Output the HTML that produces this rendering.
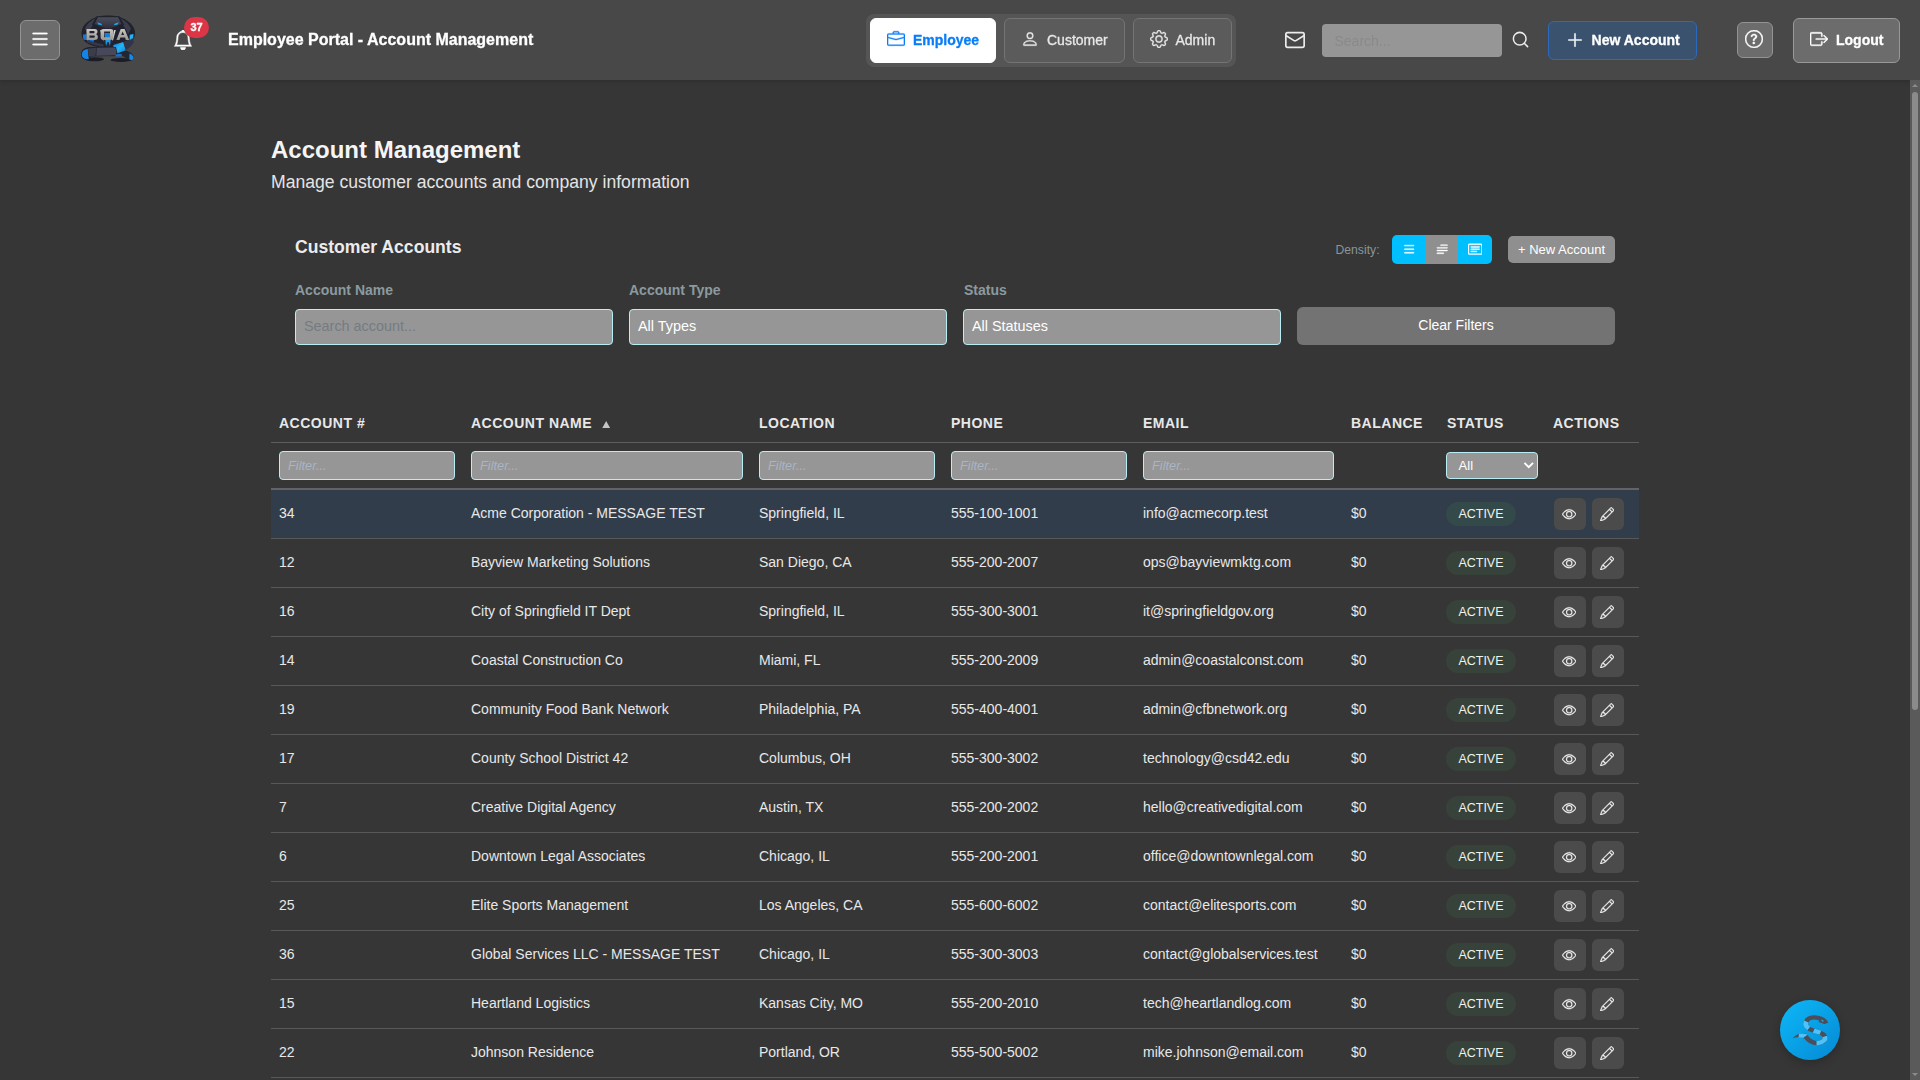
<!DOCTYPE html>
<html lang="en">
<head>
<meta charset="utf-8">
<title>Employee Portal - Account Management</title>
<style>
*{box-sizing:border-box;margin:0;padding:0}
html,body{width:1920px;height:1080px;overflow:hidden;background:#363636;font-family:"Liberation Sans",sans-serif;color:#fff}
body{position:relative}
.abs{position:absolute}
/* ---------- header ---------- */
#hdr{position:absolute;left:0;top:0;width:1920px;height:80px;background:#484848;box-shadow:0 2px 4px rgba(0,0,0,.14);will-change:transform}
#hdr svg{display:block}
#hdr{-webkit-text-stroke:.3px currentColor}
.hbtn{position:absolute;border-radius:6px;background:#6c6c6c;border:1px solid #939393}
#burger{left:20px;top:20px;width:40px;height:40px}
#ptitle{position:absolute;left:228px;top:30px;font-size:16px;font-weight:bold;line-height:20px;white-space:nowrap}
#badge{position:absolute;left:184px;top:17px;width:25px;height:21px;border-radius:11px;background:#dc3545;font-size:11px;font-weight:bold;line-height:20.400px;text-align:center}
#tabs{position:absolute;left:866px;top:14px;width:370px;height:53px;border-radius:8px;background:#555}
.tab{position:absolute;top:4px;height:45px;border-radius:6px;border:1px solid #747474;background:#5b5b5b;font-size:14px;color:#e8e8e8;white-space:nowrap}
.tab span{position:absolute;top:11px;line-height:20px}
.tab svg{position:absolute;width:18px;height:18px;fill:currentColor;stroke:currentColor;stroke-width:.3}
.tab.on{background:#fff;border-color:#fff;color:#0a7df8;font-weight:bold}
#hsearch{position:absolute;left:1322px;top:24px;width:180px;height:33px;border-radius:4px;background:#969696;color:#8a8a8a;font-size:14px;line-height:34px;padding-left:12.500px;-webkit-text-stroke:0}
#newacc{position:absolute;left:1548px;top:21px;width:149px;height:39px;border-radius:6px;background:#3a526e;border:1px solid #2a6bc0;font-size:14px;font-weight:bold;white-space:nowrap}
#help{left:1737px;top:22px;width:36px;height:36px}
#logout{left:1793px;top:18px;width:107px;height:45px;font-size:14px;font-weight:bold;white-space:nowrap;border-color:#999}
/* ---------- scrollbar ---------- */
#sb{position:absolute;left:1910px;top:80px;width:10px;height:1000px;background:#5a5a5a}
#sbth{position:absolute;left:2px;top:12px;width:6px;height:618px;border-radius:3px;background:#8b8b8b}
/* ---------- content ---------- */
#h1{position:absolute;left:271px;top:136px;font-size:24px;font-weight:bold;line-height:28px;white-space:nowrap;color:#f5f5f5}
#sub{position:absolute;left:271px;top:172px;font-size:17.6px;line-height:20px;color:#e4e4e4;white-space:nowrap}
#ctitle{position:absolute;left:295px;top:236px;font-size:17.6px;font-weight:bold;line-height:22px;color:#ececec;white-space:nowrap}
.lbl{position:absolute;top:282px;font-size:14px;font-weight:bold;line-height:16px;color:#8b9a9e;white-space:nowrap}
.fin{position:absolute;top:309px;width:318px;height:36px;border-radius:4px;background:#969696;border:1px solid #b8edf3;font-size:14.4px;line-height:32px;padding-left:8px;color:#fff;white-space:nowrap}
#clear{position:absolute;left:1297px;top:307px;width:318px;height:38px;border-radius:6px;background:#737373;font-size:14px;line-height:36px;text-align:center;color:#fff}
#dens{position:absolute;left:1335.500px;top:242.700px;font-size:12.200px;line-height:14px;color:#8a9498}
#dgrp{position:absolute;left:1392px;top:235px;width:100px;height:29px;border-radius:5px;overflow:hidden;background:#00bfff}
#dgrp i{position:absolute;left:33px;top:0;width:33px;height:29px;background:#8f8f8f}
#dgrp svg{position:absolute;top:7.300px;width:14.400px;height:14.400px;fill:#fff;stroke:#fff;stroke-width:.5}
#newacc2{position:absolute;left:1508px;top:236px;width:107px;height:27px;border-radius:5px;background:#8f8f8f;font-size:13px;line-height:27px;text-align:center;color:#fff;white-space:nowrap}
/* ---------- table ---------- */
#tbl{position:absolute;left:271px;top:404px;width:1368px;border-collapse:separate;border-spacing:0;table-layout:fixed}
#tbl th{height:39px;text-align:left;padding:0 8px;font-size:14px;font-weight:bold;letter-spacing:.5px;color:#e8e8e8;border-bottom:1px solid #5e5e5e;white-space:nowrap;vertical-align:middle}
#tbl tr.f td{height:47px;border-bottom:2px solid #636363;padding:0 8px;vertical-align:middle}
#tbl tr.r td{height:49px;padding:0 8px 3px;font-size:14px;color:#e8e8e8;border-bottom:1px solid #585858;white-space:nowrap;vertical-align:middle}
#tbl tr.r td.c{padding:0 8px 1px}
#tbl tr.sel td{background:#323d4c}
.flt{height:29px;border-radius:4px;background:#969696;border:1px solid #b8edf3;font-size:12.800px;font-style:italic;line-height:27px;padding-left:8px;color:#a9b4c4}
.srt{display:inline-block;margin-left:9.500px;width:8.400px;height:7.500px;fill:#c4c4c4;vertical-align:baseline}
#ssel{position:relative;height:27px;width:92px;margin-left:-1px;border-radius:4px;background:#969696;border:1px solid #b8edf3;font-size:13px;line-height:25px;padding-left:11.600px;color:#fff}
#ssel svg{position:absolute;right:2.500px;top:8px;width:11.500px;height:8.600px;fill:none;stroke:#fff;stroke-width:2}
.pill{display:inline-block;vertical-align:middle;height:24px;line-height:24px;padding:0 12.400px;margin-left:-1px;border-radius:12px;background:#37433a;font-size:12.500px;color:#eef3ee}
.sel .pill{background:#33494a}
.ab{display:inline-block;vertical-align:middle;position:relative;width:32px;height:32px;border-radius:6px;background:#4b4b4b;margin-right:6px}
.ab svg{position:absolute;left:8.100px;top:9.400px;width:14.400px;height:14.400px;fill:#f0f0f0;stroke:#f0f0f0;stroke-width:.3}
.hi{position:absolute;fill:#fff;stroke:#fff;stroke-width:.4}
#fab{position:absolute;left:1780px;top:1000px;width:60px;height:60px;border-radius:50%;background:linear-gradient(135deg,#0db8f8,#0589d4);box-shadow:0 3px 10px rgba(0,0,0,.22);overflow:hidden}
</style>
</head>
<body>
<div id="hdr">
  <div id="burger" class="hbtn"><svg class="hi" style="left:8px;top:6.900px;width:22px;height:22px;stroke-width:.25" viewBox="0 0 16 16"><path fill-rule="evenodd" d="M2.5 12a.5.5 0 0 1 .5-.5h10a.5.5 0 0 1 0 1H3a.5.5 0 0 1-.5-.5zm0-4a.5.5 0 0 1 .5-.5h10a.5.5 0 0 1 0 1H3a.5.5 0 0 1-.5-.5zm0-4a.5.5 0 0 1 .5-.5h10a.5.5 0 0 1 0 1H3a.5.5 0 0 1-.5-.5z"/></svg></div>
  <svg style="position:absolute;left:78px;top:12px;width:60px;height:54px" viewBox="0 0 1200 1080">
<defs><filter id="lb" x="-5%" y="-5%" width="110%" height="110%"><feGaussianBlur stdDeviation="5"/></filter>
<linearGradient id="lg1" x1="0" y1="0" x2="0" y2="1"><stop offset="0" stop-color="#4a4d5d"/><stop offset="1" stop-color="#2c2e3b"/></linearGradient>
<linearGradient id="lg2" x1="0" y1="0" x2="0" y2="1"><stop offset="0" stop-color="#c9c7c0"/><stop offset="1" stop-color="#9a9892"/></linearGradient>
<linearGradient id="lg3" x1="0" y1="0" x2="1" y2="1"><stop offset="0" stop-color="#0f7fe0"/><stop offset=".5" stop-color="#25b4f5"/><stop offset="1" stop-color="#0f7fe0"/></linearGradient></defs>
<g filter="url(#lb)">
<ellipse cx="330" cy="945" rx="190" ry="42" fill="#1b1d28"/>
<ellipse cx="860" cy="958" rx="210" ry="40" fill="#1b1d28"/>
<path d="M600 70C900 70 1140 225 1140 425C1140 610 940 715 600 715C260 715 70 610 70 425C70 225 300 70 600 70Z" fill="#20222d"/>
<path d="M140 330C190 215 290 150 370 120L300 270C250 320 215 380 200 450Z" fill="#3a3d4c"/>
<path d="M1060 330C1010 215 910 150 830 120L900 270C950 320 985 380 1000 450Z" fill="#3a3d4c"/>
<path d="M95 455L165 440L175 560L110 555Z" fill="#1477d8"/>
<path d="M1035 455L1110 440L1095 590L1030 585Z" fill="#22b3f3"/>
<path d="M180 560L330 555L300 610L200 605Z" fill="#1270d0"/>
<path d="M170 600C300 660 420 690 520 690L500 640C400 630 300 600 215 560Z" fill="#34374a"/>
<path d="M1040 600C950 660 850 690 700 700L720 640C830 630 930 600 1000 560Z" fill="#3a3d4c"/>
<path d="M370 85L830 85L925 255L740 350L460 350L275 255Z" fill="#20222d"/>
<path d="M400 105L800 105L870 240L640 330L560 330L330 240Z" fill="url(#lg1)"/>
<path d="M385 205L470 235L480 265L405 250Z" fill="#1fa9ee"/>
<path d="M815 205L730 235L720 265L795 250Z" fill="#1fa9ee"/>
<path d="M470 350L730 350L700 600L640 690L560 690L500 600Z" fill="#262835"/>
<path d="M530 420L670 420L655 540L545 540Z" fill="#1182e0"/>
<path d="M548 560L652 560L640 680L612 600L588 600L560 680Z" fill="#1c9aee"/>
<path d="M445 360L475 360L520 560L500 570Z" fill="#d8d8dc"/>
<path d="M755 360L725 360L680 560L700 570Z" fill="#d8d8dc"/>
<path d="M700 665L905 600L955 765L785 825Z" fill="url(#lg3)"/>
<path d="M905 600C1000 570 1060 560 1090 520L1120 600C1080 680 1010 730 955 765Z" fill="#32354a"/>
<path d="M60 850C60 740 150 700 260 700L760 700L790 830L760 880L260 890L200 960C120 960 60 930 60 850Z" fill="#20222d"/>
<path d="M75 850C75 780 130 745 195 740L215 940C130 950 75 915 75 850Z" fill="#1583e6"/>
<path d="M200 730L365 715L350 875L215 890Z" fill="#3a3d4c"/>
<path d="M375 715L745 710L770 800L750 865L365 875Z" fill="#474a5a"/>
<path d="M790 830L960 770C1060 800 1120 860 1115 930C1100 975 1040 975 1010 960L900 880L770 880Z" fill="#23252f"/>
<path d="M1030 830C1090 850 1120 900 1110 940C1090 965 1050 960 1025 945Z" fill="#1588e8"/>
<path d="M740 850L870 835L880 885L760 890Z" fill="#1270d0"/>
</g>
<g filter="url(#lb)" fill="url(#lg2)">
<path fill-rule="evenodd" d="M170 338L330 338C378 338 390 364 390 392C390 422 378 438 358 446C383 452 397 474 397 504C397 542 378 558 330 558L170 558ZM230 380L230 426L312 426C326 426 331 416 331 403C331 390 326 380 312 380ZM230 468L230 516L316 516C332 516 337 505 337 492C337 479 332 468 316 468Z"/>
<path fill-rule="evenodd" d="M512 338L650 338C694 338 710 360 710 398L710 498C710 536 694 558 650 558L512 558C468 558 452 536 452 498L452 398C452 360 468 338 512 338ZM522 392L522 504L640 504L640 392Z"/>
<path fill-rule="evenodd" d="M855 338L932 338L1022 558L958 558L940 512L847 512L829 558L768 558ZM893 388L864 462L922 462Z"/>
</g>
</svg>
  <svg class="hi" style="left:172.900px;top:30px;width:20px;height:20px;stroke:#fff;stroke-width:.45" viewBox="0 0 16 16"><path d="M8 16a2 2 0 0 0 2-2H6a2 2 0 0 0 2 2zM8 1.918l-.797.161A4.002 4.002 0 0 0 4 6c0 .628-.134 2.197-.459 3.742-.16.767-.376 1.566-.663 2.258h10.244c-.287-.692-.502-1.490-.663-2.258C12.134 8.197 12 6.628 12 6a4.002 4.002 0 0 0-3.203-3.920L8 1.917zM14.220 12c.223.447.481.801.780 1H1c.299-.199.557-.553.780-1C2.680 10.200 3 6.880 3 6c0-2.420 1.720-4.440 4.005-4.901a1 1 0 1 1 1.990 0A5.002 5.002 0 0 1 13 6c0 .880.320 4.200 1.220 6z"/></svg>
  <div id="badge">37</div>
  <div id="ptitle">Employee Portal - Account Management</div>
  <div id="tabs">
    <div class="tab on" style="left:4px;width:126px"><svg style="left:16px;top:11px" viewBox="0 0 16 16"><path d="M6.500 1A1.500 1.500 0 0 0 5 2.500V3H1.500A1.500 1.500 0 0 0 0 4.500v8A1.500 1.500 0 0 0 1.500 14h13a1.500 1.500 0 0 0 1.500-1.500v-8A1.500 1.500 0 0 0 14.500 3H11v-.5A1.500 1.500 0 0 0 9.500 1h-3zm0 1h3a.5.5 0 0 1 .5.5V3H6v-.5a.5.5 0 0 1 .5-.5zm1.886 6.914L15 7.151V12.500a.5.5 0 0 1-.5.5h-13a.5.5 0 0 1-.5-.5V7.150l6.614 1.764a1.500 1.500 0 0 0 .772 0zM1.500 4h13a.5.5 0 0 1 .5.5v1.616L8.129 7.948a.5.5 0 0 1-.258 0L1 6.116V4.500a.5.5 0 0 1 .5-.5z"/></svg><span style="left:42px">Employee</span></div>
    <div class="tab" style="left:138px;width:121px"><svg style="left:15.600px;top:11px" viewBox="0 0 16 16"><path d="M8 8a3 3 0 1 0 0-6 3 3 0 0 0 0 6zm2-3a2 2 0 1 1-4 0 2 2 0 0 1 4 0zm4 8c0 1-1 1-1 1H3s-1 0-1-1 1-4 6-4 6 3 6 4zm-1-.004c-.001-.246-.154-.986-.832-1.664C11.516 10.680 10.289 10 8 10c-2.290 0-3.516.680-4.168 1.332-.678.678-.830 1.418-.832 1.664h10z"/></svg><span style="left:42px">Customer</span></div>
    <div class="tab" style="left:267px;width:99px"><svg style="left:15.500px;top:11px" viewBox="0 0 16 16"><path d="M8 4.754a3.246 3.246 0 1 0 0 6.492 3.246 3.246 0 0 0 0-6.492zM5.754 8a2.246 2.246 0 1 1 4.492 0 2.246 2.246 0 0 1-4.492 0z"/><path d="M9.796 1.343c-.527-1.790-3.065-1.790-3.592 0l-.094.319a.873.873 0 0 1-1.255.520l-.292-.160c-1.640-.892-3.433.902-2.540 2.541l.159.292a.873.873 0 0 1-.520 1.255l-.319.094c-1.790.527-1.790 3.065 0 3.592l.319.094a.873.873 0 0 1 .520 1.255l-.160.292c-.892 1.640.901 3.434 2.541 2.540l.292-.159a.873.873 0 0 1 1.255.520l.094.319c.527 1.790 3.065 1.790 3.592 0l.094-.319a.873.873 0 0 1 1.255-.520l.292.160c1.640.893 3.434-.902 2.540-2.541l-.159-.292a.873.873 0 0 1 .520-1.255l.319-.094c1.790-.527 1.790-3.065 0-3.592l-.319-.094a.873.873 0 0 1-.520-1.255l.160-.292c.893-1.640-.902-3.433-2.541-2.540l-.292.159a.873.873 0 0 1-1.255-.520l-.094-.319zm-2.633.283c.246-.835 1.428-.835 1.674 0l.094.319a1.873 1.873 0 0 0 2.693 1.115l.291-.160c.764-.415 1.600.420 1.184 1.185l-.159.292a1.873 1.873 0 0 0 1.116 2.692l.318.094c.835.246.835 1.428 0 1.674l-.319.094a1.873 1.873 0 0 0-1.115 2.693l.160.291c.415.764-.420 1.600-1.185 1.184l-.291-.159a1.873 1.873 0 0 0-2.693 1.116l-.094.318c-.246.835-1.428.835-1.674 0l-.094-.319a1.873 1.873 0 0 0-2.692-1.115l-.292.160c-.764.415-1.600-.420-1.184-1.185l.159-.291A1.873 1.873 0 0 0 1.945 8.930l-.319-.094c-.835-.246-.835-1.428 0-1.674l.319-.094A1.873 1.873 0 0 0 3.060 4.377l-.160-.292c-.415-.764.420-1.600 1.185-1.184l.292.159a1.873 1.873 0 0 0 2.692-1.115l.094-.319z"/></svg><span style="left:41.500px">Admin</span></div>
  </div>
  <svg class="hi" style="left:1284px;top:29px;width:22px;height:22px;fill:none;stroke:#ececec;stroke-width:1.850;stroke-linecap:round;stroke-linejoin:round" viewBox="0 0 24 24"><rect x="2" y="4" width="20" height="16" rx="2"/><path d="m22 7-8.970 5.700a1.940 1.940 0 0 1-2.060 0L2 7"/></svg>
  <div id="hsearch">Search...</div>
  <svg class="hi" style="left:1511.470px;top:30.220px;width:19px;height:19px;fill:none;stroke:#ececec;stroke-width:1.900;stroke-linecap:round;stroke-linejoin:round" viewBox="0 0 24 24"><circle cx="11" cy="11" r="8"/><path d="m21 21-4.300-4.300"/></svg>
  <div id="newacc"><svg class="hi" style="left:17px;top:9px;width:18px;height:18px" viewBox="0 0 16 16"><path fill-rule="evenodd" d="M8 2a.5.5 0 0 1 .5.5v5h5a.5.5 0 0 1 0 1h-5v5a.5.5 0 0 1-1 0v-5h-5a.5.5 0 0 1 0-1h5v-5A.5.5 0 0 1 8 2Z"/></svg><span style="position:absolute;left:42.600px;top:8px;line-height:20px">New Account</span></div>
  <div id="help" class="hbtn"><svg class="hi" style="left:7.200px;top:7px;width:18px;height:18px" viewBox="0 0 16 16"><path d="M8 15A7 7 0 1 1 8 1a7 7 0 0 1 0 14zm0 1A8 8 0 1 0 8 0a8 8 0 0 0 0 16z"/><path d="M5.255 5.786a.237.237 0 0 0 .241.247h.825c.138 0 .248-.113.266-.250.090-.656.540-1.134 1.342-1.134.686 0 1.314.343 1.314 1.168 0 .635-.374.927-.965 1.371-.673.489-1.206 1.060-1.168 1.987l.003.217a.250.250 0 0 0 .250.246h.811a.250.250 0 0 0 .250-.250v-.105c0-.718.273-.927 1.010-1.486.609-.463 1.244-.977 1.244-2.056 0-1.511-1.276-2.241-2.673-2.241-1.267 0-2.655.590-2.750 2.286zm1.557 5.763c0 .533.425.927 1.010.927.609 0 1.028-.394 1.028-.927 0-.552-.420-.940-1.029-.940-.584 0-1.009.388-1.009.940z"/></svg></div>
  <div id="logout" class="hbtn"><svg class="hi" style="left:15.500px;top:11px;width:18px;height:18px" viewBox="0 0 16 16"><path fill-rule="evenodd" d="M10 12.500a.5.5 0 0 1-.5.5h-8a.5.5 0 0 1-.5-.5v-9a.5.5 0 0 1 .5-.5h8a.5.5 0 0 1 .5.5v2a.5.5 0 0 0 1 0v-2A1.500 1.500 0 0 0 9.500 2h-8A1.500 1.500 0 0 0 0 3.500v9A1.500 1.500 0 0 0 1.500 14h8a1.500 1.500 0 0 0 1.500-1.500v-2a.5.5 0 0 0-1 0v2z"/><path fill-rule="evenodd" d="M15.854 8.354a.5.5 0 0 0 0-.708l-3-3a.5.5 0 0 0-.708.708L14.293 7.500H5.500a.5.5 0 0 0 0 1h8.793l-2.147 2.146a.5.5 0 0 0 .708.708l3-3z"/></svg><span style="position:absolute;left:42px;top:11px;line-height:20px">Logout</span></div>
</div>
<div id="sb"><div id="sbth"></div><svg style="position:absolute;left:0;top:0" width="10" height="1000"><path d="M5 4L8 7H2Z" fill="#8b8b8b"/><path d="M5 996L8 993H2Z" fill="#8b8b8b"/></svg></div>

<div id="h1">Account Management</div>
<div id="sub">Manage customer accounts and company information</div>
<div id="ctitle">Customer Accounts</div>
<div id="dens">Density:</div>
<div id="dgrp"><i></i><svg style="left:10.200px" viewBox="0 0 16 16"><path fill-rule="evenodd" d="M2.500 12a.5.5 0 0 1 .5-.5h10a.5.5 0 0 1 0 1H3a.5.5 0 0 1-.5-.5zm0-4a.5.5 0 0 1 .5-.5h10a.5.5 0 0 1 0 1H3a.5.5 0 0 1-.5-.5zm0-4a.5.5 0 0 1 .5-.5h10a.5.5 0 0 1 0 1H3a.5.5 0 0 1-.5-.5z"/></svg><svg style="left:43.100px" viewBox="0 0 16 16"><path fill-rule="evenodd" d="M2 12.500a.5.5 0 0 1 .5-.5h7a.5.5 0 0 1 0 1h-7a.5.5 0 0 1-.5-.5zm0-3a.5.5 0 0 1 .5-.5h11a.5.5 0 0 1 0 1h-11a.5.5 0 0 1-.5-.5zm0-3a.5.5 0 0 1 .5-.5h11a.5.5 0 0 1 0 1h-11a.5.5 0 0 1-.5-.5zm4-3a.5.5 0 0 1 .5-.5h7a.5.5 0 0 1 0 1h-7a.5.5 0 0 1-.5-.5z"/></svg><svg style="left:76px" viewBox="0 0 16 16"><path d="M14.500 3a.5.5 0 0 1 .5.5v9a.5.5 0 0 1-.5.5h-13a.5.5 0 0 1-.5-.5v-9a.5.5 0 0 1 .5-.5h13zm-13-1A1.500 1.500 0 0 0 0 3.500v9A1.500 1.500 0 0 0 1.500 14h13a1.500 1.500 0 0 0 1.500-1.500v-9A1.500 1.500 0 0 0 14.500 2h-13z"/><path d="M3 5.500a.5.5 0 0 1 .5-.5h9a.5.5 0 0 1 0 1h-9a.5.5 0 0 1-.5-.5zM3 8a.5.5 0 0 1 .5-.5h9a.5.5 0 0 1 0 1h-9A.5.5 0 0 1 3 8zm0 2.500a.5.5 0 0 1 .5-.5h6a.5.5 0 0 1 0 1h-6a.5.5 0 0 1-.5-.5z"/></svg></div>
<div id="newacc2">+ New Account</div>
<div class="lbl" style="left:295px">Account Name</div>
<div class="lbl" style="left:629px">Account Type</div>
<div class="lbl" style="left:964px">Status</div>
<div class="fin" style="left:295px;color:#747c82">Search account...</div>
<div class="fin" style="left:629px">All Types</div>
<div class="fin" style="left:963px">All Statuses</div>
<div id="clear">Clear Filters</div>

<table id="tbl">
<colgroup><col style="width:192px"><col style="width:288px"><col style="width:192px"><col style="width:192px"><col style="width:208px"><col style="width:96px"><col style="width:106px"><col style="width:94px"></colgroup>
<thead>
<tr><th>ACCOUNT #</th><th>ACCOUNT NAME<svg class="srt" viewBox="0 0 84 75"><path d="M42 0L84 75H0Z"/></svg></th><th>LOCATION</th><th>PHONE</th><th>EMAIL</th><th>BALANCE</th><th>STATUS</th><th>ACTIONS</th></tr>
<tr class="f"><td><div class="flt">Filter...</div></td><td><div class="flt">Filter...</div></td><td><div class="flt">Filter...</div></td><td><div class="flt">Filter...</div></td><td><div class="flt" style="margin-right:1px">Filter...</div></td><td></td><td><div id="ssel">All<svg viewBox="0 0 12 9"><path d="M1.500 2l4.500 4.500L10.500 2"/></svg></div></td><td></td></tr>
</thead>
<tbody id="tb">
<tr class="r sel"><td>34</td><td>Acme Corporation - MESSAGE TEST</td><td>Springfield, IL</td><td>555-100-1001</td><td>info@acmecorp.test</td><td>$0</td><td class="c"><span class="pill">ACTIVE</span></td><td class="c"><span class="ab" style="margin-left:1px"><svg class="ie" viewBox="0 0 16 16"><path d="M16 8s-3-5.500-8-5.500S0 8 0 8s3 5.500 8 5.500S16 8 16 8zM1.173 8a13.133 13.133 0 0 1 1.660-2.043C4.120 4.668 5.880 3.500 8 3.500c2.120 0 3.879 1.168 5.168 2.457A13.133 13.133 0 0 1 14.828 8c-.058.087-.122.183-.195.288-.335.480-.830 1.120-1.465 1.755C11.879 11.332 10.119 12.500 8 12.500c-2.120 0-3.879-1.168-5.168-2.457A13.134 13.134 0 0 1 1.172 8z"/><path d="M8 5.500a2.500 2.500 0 1 0 0 5 2.500 2.500 0 0 0 0-5zM4.500 8a3.500 3.500 0 1 1 7 0 3.500 3.500 0 0 1-7 0z"/></svg></span><span class="ab"><svg class="ip" viewBox="0 0 16 16"><path d="M12.146.146a.5.5 0 0 1 .708 0l3 3a.5.5 0 0 1 0 .708l-10 10a.5.5 0 0 1-.168.110l-5 2a.5.5 0 0 1-.650-.650l2-5a.5.5 0 0 1 .110-.168l10-10zM11.207 2.500 13.500 4.793 14.793 3.500 12.500 1.207 11.207 2.500zm1.586 3L10.500 3.207 4 9.707V10h.5a.5.5 0 0 1 .5.5v.5h.5a.5.5 0 0 1 .5.5v.5h.293l6.500-6.500zm-9.761 5.175-.106.106-1.528 3.821 3.821-1.528.106-.106A.5.5 0 0 1 5 12.500V12h-.5a.5.5 0 0 1-.5-.5V11h-.5a.5.5 0 0 1-.468-.325z"/></svg></span></td></tr>
<tr class="r"><td>12</td><td>Bayview Marketing Solutions</td><td>San Diego, CA</td><td>555-200-2007</td><td>ops@bayviewmktg.com</td><td>$0</td><td class="c"><span class="pill">ACTIVE</span></td><td class="c"><span class="ab" style="margin-left:1px"><svg class="ie" viewBox="0 0 16 16"><path d="M16 8s-3-5.500-8-5.500S0 8 0 8s3 5.500 8 5.500S16 8 16 8zM1.173 8a13.133 13.133 0 0 1 1.660-2.043C4.120 4.668 5.880 3.500 8 3.500c2.120 0 3.879 1.168 5.168 2.457A13.133 13.133 0 0 1 14.828 8c-.058.087-.122.183-.195.288-.335.480-.830 1.120-1.465 1.755C11.879 11.332 10.119 12.500 8 12.500c-2.120 0-3.879-1.168-5.168-2.457A13.134 13.134 0 0 1 1.172 8z"/><path d="M8 5.500a2.500 2.500 0 1 0 0 5 2.500 2.500 0 0 0 0-5zM4.500 8a3.500 3.500 0 1 1 7 0 3.500 3.500 0 0 1-7 0z"/></svg></span><span class="ab"><svg class="ip" viewBox="0 0 16 16"><path d="M12.146.146a.5.5 0 0 1 .708 0l3 3a.5.5 0 0 1 0 .708l-10 10a.5.5 0 0 1-.168.110l-5 2a.5.5 0 0 1-.650-.650l2-5a.5.5 0 0 1 .110-.168l10-10zM11.207 2.500 13.500 4.793 14.793 3.500 12.500 1.207 11.207 2.500zm1.586 3L10.500 3.207 4 9.707V10h.5a.5.5 0 0 1 .5.5v.5h.5a.5.5 0 0 1 .5.5v.5h.293l6.500-6.500zm-9.761 5.175-.106.106-1.528 3.821 3.821-1.528.106-.106A.5.5 0 0 1 5 12.500V12h-.5a.5.5 0 0 1-.5-.5V11h-.5a.5.5 0 0 1-.468-.325z"/></svg></span></td></tr>
<tr class="r"><td>16</td><td>City of Springfield IT Dept</td><td>Springfield, IL</td><td>555-300-3001</td><td>it@springfieldgov.org</td><td>$0</td><td class="c"><span class="pill">ACTIVE</span></td><td class="c"><span class="ab" style="margin-left:1px"><svg class="ie" viewBox="0 0 16 16"><path d="M16 8s-3-5.500-8-5.500S0 8 0 8s3 5.500 8 5.500S16 8 16 8zM1.173 8a13.133 13.133 0 0 1 1.660-2.043C4.120 4.668 5.880 3.500 8 3.500c2.120 0 3.879 1.168 5.168 2.457A13.133 13.133 0 0 1 14.828 8c-.058.087-.122.183-.195.288-.335.480-.830 1.120-1.465 1.755C11.879 11.332 10.119 12.500 8 12.500c-2.120 0-3.879-1.168-5.168-2.457A13.134 13.134 0 0 1 1.172 8z"/><path d="M8 5.500a2.500 2.500 0 1 0 0 5 2.500 2.500 0 0 0 0-5zM4.500 8a3.500 3.500 0 1 1 7 0 3.500 3.500 0 0 1-7 0z"/></svg></span><span class="ab"><svg class="ip" viewBox="0 0 16 16"><path d="M12.146.146a.5.5 0 0 1 .708 0l3 3a.5.5 0 0 1 0 .708l-10 10a.5.5 0 0 1-.168.110l-5 2a.5.5 0 0 1-.650-.650l2-5a.5.5 0 0 1 .110-.168l10-10zM11.207 2.500 13.500 4.793 14.793 3.500 12.500 1.207 11.207 2.500zm1.586 3L10.500 3.207 4 9.707V10h.5a.5.5 0 0 1 .5.5v.5h.5a.5.5 0 0 1 .5.5v.5h.293l6.500-6.500zm-9.761 5.175-.106.106-1.528 3.821 3.821-1.528.106-.106A.5.5 0 0 1 5 12.500V12h-.5a.5.5 0 0 1-.5-.5V11h-.5a.5.5 0 0 1-.468-.325z"/></svg></span></td></tr>
<tr class="r"><td>14</td><td>Coastal Construction Co</td><td>Miami, FL</td><td>555-200-2009</td><td>admin@coastalconst.com</td><td>$0</td><td class="c"><span class="pill">ACTIVE</span></td><td class="c"><span class="ab" style="margin-left:1px"><svg class="ie" viewBox="0 0 16 16"><path d="M16 8s-3-5.500-8-5.500S0 8 0 8s3 5.500 8 5.500S16 8 16 8zM1.173 8a13.133 13.133 0 0 1 1.660-2.043C4.120 4.668 5.880 3.500 8 3.500c2.120 0 3.879 1.168 5.168 2.457A13.133 13.133 0 0 1 14.828 8c-.058.087-.122.183-.195.288-.335.480-.830 1.120-1.465 1.755C11.879 11.332 10.119 12.500 8 12.500c-2.120 0-3.879-1.168-5.168-2.457A13.134 13.134 0 0 1 1.172 8z"/><path d="M8 5.500a2.500 2.500 0 1 0 0 5 2.500 2.500 0 0 0 0-5zM4.500 8a3.500 3.500 0 1 1 7 0 3.500 3.500 0 0 1-7 0z"/></svg></span><span class="ab"><svg class="ip" viewBox="0 0 16 16"><path d="M12.146.146a.5.5 0 0 1 .708 0l3 3a.5.5 0 0 1 0 .708l-10 10a.5.5 0 0 1-.168.110l-5 2a.5.5 0 0 1-.650-.650l2-5a.5.5 0 0 1 .110-.168l10-10zM11.207 2.500 13.500 4.793 14.793 3.500 12.500 1.207 11.207 2.500zm1.586 3L10.500 3.207 4 9.707V10h.5a.5.5 0 0 1 .5.5v.5h.5a.5.5 0 0 1 .5.5v.5h.293l6.500-6.500zm-9.761 5.175-.106.106-1.528 3.821 3.821-1.528.106-.106A.5.5 0 0 1 5 12.500V12h-.5a.5.5 0 0 1-.5-.5V11h-.5a.5.5 0 0 1-.468-.325z"/></svg></span></td></tr>
<tr class="r"><td>19</td><td>Community Food Bank Network</td><td>Philadelphia, PA</td><td>555-400-4001</td><td>admin@cfbnetwork.org</td><td>$0</td><td class="c"><span class="pill">ACTIVE</span></td><td class="c"><span class="ab" style="margin-left:1px"><svg class="ie" viewBox="0 0 16 16"><path d="M16 8s-3-5.500-8-5.500S0 8 0 8s3 5.500 8 5.500S16 8 16 8zM1.173 8a13.133 13.133 0 0 1 1.660-2.043C4.120 4.668 5.880 3.500 8 3.500c2.120 0 3.879 1.168 5.168 2.457A13.133 13.133 0 0 1 14.828 8c-.058.087-.122.183-.195.288-.335.480-.830 1.120-1.465 1.755C11.879 11.332 10.119 12.500 8 12.500c-2.120 0-3.879-1.168-5.168-2.457A13.134 13.134 0 0 1 1.172 8z"/><path d="M8 5.500a2.500 2.500 0 1 0 0 5 2.500 2.500 0 0 0 0-5zM4.500 8a3.500 3.500 0 1 1 7 0 3.500 3.500 0 0 1-7 0z"/></svg></span><span class="ab"><svg class="ip" viewBox="0 0 16 16"><path d="M12.146.146a.5.5 0 0 1 .708 0l3 3a.5.5 0 0 1 0 .708l-10 10a.5.5 0 0 1-.168.110l-5 2a.5.5 0 0 1-.650-.650l2-5a.5.5 0 0 1 .110-.168l10-10zM11.207 2.500 13.500 4.793 14.793 3.500 12.500 1.207 11.207 2.500zm1.586 3L10.500 3.207 4 9.707V10h.5a.5.5 0 0 1 .5.5v.5h.5a.5.5 0 0 1 .5.5v.5h.293l6.500-6.500zm-9.761 5.175-.106.106-1.528 3.821 3.821-1.528.106-.106A.5.5 0 0 1 5 12.500V12h-.5a.5.5 0 0 1-.5-.5V11h-.5a.5.5 0 0 1-.468-.325z"/></svg></span></td></tr>
<tr class="r"><td>17</td><td>County School District 42</td><td>Columbus, OH</td><td>555-300-3002</td><td>technology@csd42.edu</td><td>$0</td><td class="c"><span class="pill">ACTIVE</span></td><td class="c"><span class="ab" style="margin-left:1px"><svg class="ie" viewBox="0 0 16 16"><path d="M16 8s-3-5.500-8-5.500S0 8 0 8s3 5.500 8 5.500S16 8 16 8zM1.173 8a13.133 13.133 0 0 1 1.660-2.043C4.120 4.668 5.880 3.500 8 3.500c2.120 0 3.879 1.168 5.168 2.457A13.133 13.133 0 0 1 14.828 8c-.058.087-.122.183-.195.288-.335.480-.830 1.120-1.465 1.755C11.879 11.332 10.119 12.500 8 12.500c-2.120 0-3.879-1.168-5.168-2.457A13.134 13.134 0 0 1 1.172 8z"/><path d="M8 5.500a2.500 2.500 0 1 0 0 5 2.500 2.500 0 0 0 0-5zM4.500 8a3.500 3.500 0 1 1 7 0 3.500 3.500 0 0 1-7 0z"/></svg></span><span class="ab"><svg class="ip" viewBox="0 0 16 16"><path d="M12.146.146a.5.5 0 0 1 .708 0l3 3a.5.5 0 0 1 0 .708l-10 10a.5.5 0 0 1-.168.110l-5 2a.5.5 0 0 1-.650-.650l2-5a.5.5 0 0 1 .110-.168l10-10zM11.207 2.500 13.500 4.793 14.793 3.500 12.500 1.207 11.207 2.500zm1.586 3L10.500 3.207 4 9.707V10h.5a.5.5 0 0 1 .5.5v.5h.5a.5.5 0 0 1 .5.5v.5h.293l6.500-6.500zm-9.761 5.175-.106.106-1.528 3.821 3.821-1.528.106-.106A.5.5 0 0 1 5 12.500V12h-.5a.5.5 0 0 1-.5-.5V11h-.5a.5.5 0 0 1-.468-.325z"/></svg></span></td></tr>
<tr class="r"><td>7</td><td>Creative Digital Agency</td><td>Austin, TX</td><td>555-200-2002</td><td>hello@creativedigital.com</td><td>$0</td><td class="c"><span class="pill">ACTIVE</span></td><td class="c"><span class="ab" style="margin-left:1px"><svg class="ie" viewBox="0 0 16 16"><path d="M16 8s-3-5.500-8-5.500S0 8 0 8s3 5.500 8 5.500S16 8 16 8zM1.173 8a13.133 13.133 0 0 1 1.660-2.043C4.120 4.668 5.880 3.500 8 3.500c2.120 0 3.879 1.168 5.168 2.457A13.133 13.133 0 0 1 14.828 8c-.058.087-.122.183-.195.288-.335.480-.830 1.120-1.465 1.755C11.879 11.332 10.119 12.500 8 12.500c-2.120 0-3.879-1.168-5.168-2.457A13.134 13.134 0 0 1 1.172 8z"/><path d="M8 5.500a2.500 2.500 0 1 0 0 5 2.500 2.500 0 0 0 0-5zM4.500 8a3.500 3.500 0 1 1 7 0 3.500 3.500 0 0 1-7 0z"/></svg></span><span class="ab"><svg class="ip" viewBox="0 0 16 16"><path d="M12.146.146a.5.5 0 0 1 .708 0l3 3a.5.5 0 0 1 0 .708l-10 10a.5.5 0 0 1-.168.110l-5 2a.5.5 0 0 1-.650-.650l2-5a.5.5 0 0 1 .110-.168l10-10zM11.207 2.500 13.500 4.793 14.793 3.500 12.500 1.207 11.207 2.500zm1.586 3L10.500 3.207 4 9.707V10h.5a.5.5 0 0 1 .5.5v.5h.5a.5.5 0 0 1 .5.5v.5h.293l6.500-6.500zm-9.761 5.175-.106.106-1.528 3.821 3.821-1.528.106-.106A.5.5 0 0 1 5 12.500V12h-.5a.5.5 0 0 1-.5-.5V11h-.5a.5.5 0 0 1-.468-.325z"/></svg></span></td></tr>
<tr class="r"><td>6</td><td>Downtown Legal Associates</td><td>Chicago, IL</td><td>555-200-2001</td><td>office@downtownlegal.com</td><td>$0</td><td class="c"><span class="pill">ACTIVE</span></td><td class="c"><span class="ab" style="margin-left:1px"><svg class="ie" viewBox="0 0 16 16"><path d="M16 8s-3-5.500-8-5.500S0 8 0 8s3 5.500 8 5.500S16 8 16 8zM1.173 8a13.133 13.133 0 0 1 1.660-2.043C4.120 4.668 5.880 3.500 8 3.500c2.120 0 3.879 1.168 5.168 2.457A13.133 13.133 0 0 1 14.828 8c-.058.087-.122.183-.195.288-.335.480-.830 1.120-1.465 1.755C11.879 11.332 10.119 12.500 8 12.500c-2.120 0-3.879-1.168-5.168-2.457A13.134 13.134 0 0 1 1.172 8z"/><path d="M8 5.500a2.500 2.500 0 1 0 0 5 2.500 2.500 0 0 0 0-5zM4.500 8a3.500 3.500 0 1 1 7 0 3.500 3.500 0 0 1-7 0z"/></svg></span><span class="ab"><svg class="ip" viewBox="0 0 16 16"><path d="M12.146.146a.5.5 0 0 1 .708 0l3 3a.5.5 0 0 1 0 .708l-10 10a.5.5 0 0 1-.168.110l-5 2a.5.5 0 0 1-.650-.650l2-5a.5.5 0 0 1 .110-.168l10-10zM11.207 2.500 13.500 4.793 14.793 3.500 12.500 1.207 11.207 2.500zm1.586 3L10.500 3.207 4 9.707V10h.5a.5.5 0 0 1 .5.5v.5h.5a.5.5 0 0 1 .5.5v.5h.293l6.500-6.500zm-9.761 5.175-.106.106-1.528 3.821 3.821-1.528.106-.106A.5.5 0 0 1 5 12.500V12h-.5a.5.5 0 0 1-.5-.5V11h-.5a.5.5 0 0 1-.468-.325z"/></svg></span></td></tr>
<tr class="r"><td>25</td><td>Elite Sports Management</td><td>Los Angeles, CA</td><td>555-600-6002</td><td>contact@elitesports.com</td><td>$0</td><td class="c"><span class="pill">ACTIVE</span></td><td class="c"><span class="ab" style="margin-left:1px"><svg class="ie" viewBox="0 0 16 16"><path d="M16 8s-3-5.500-8-5.500S0 8 0 8s3 5.500 8 5.500S16 8 16 8zM1.173 8a13.133 13.133 0 0 1 1.660-2.043C4.120 4.668 5.880 3.500 8 3.500c2.120 0 3.879 1.168 5.168 2.457A13.133 13.133 0 0 1 14.828 8c-.058.087-.122.183-.195.288-.335.480-.830 1.120-1.465 1.755C11.879 11.332 10.119 12.500 8 12.500c-2.120 0-3.879-1.168-5.168-2.457A13.134 13.134 0 0 1 1.172 8z"/><path d="M8 5.500a2.500 2.500 0 1 0 0 5 2.500 2.500 0 0 0 0-5zM4.500 8a3.500 3.500 0 1 1 7 0 3.500 3.500 0 0 1-7 0z"/></svg></span><span class="ab"><svg class="ip" viewBox="0 0 16 16"><path d="M12.146.146a.5.5 0 0 1 .708 0l3 3a.5.5 0 0 1 0 .708l-10 10a.5.5 0 0 1-.168.110l-5 2a.5.5 0 0 1-.650-.650l2-5a.5.5 0 0 1 .110-.168l10-10zM11.207 2.500 13.500 4.793 14.793 3.500 12.500 1.207 11.207 2.500zm1.586 3L10.500 3.207 4 9.707V10h.5a.5.5 0 0 1 .5.5v.5h.5a.5.5 0 0 1 .5.5v.5h.293l6.500-6.500zm-9.761 5.175-.106.106-1.528 3.821 3.821-1.528.106-.106A.5.5 0 0 1 5 12.500V12h-.5a.5.5 0 0 1-.5-.5V11h-.5a.5.5 0 0 1-.468-.325z"/></svg></span></td></tr>
<tr class="r"><td>36</td><td>Global Services LLC - MESSAGE TEST</td><td>Chicago, IL</td><td>555-300-3003</td><td>contact@globalservices.test</td><td>$0</td><td class="c"><span class="pill">ACTIVE</span></td><td class="c"><span class="ab" style="margin-left:1px"><svg class="ie" viewBox="0 0 16 16"><path d="M16 8s-3-5.500-8-5.500S0 8 0 8s3 5.500 8 5.500S16 8 16 8zM1.173 8a13.133 13.133 0 0 1 1.660-2.043C4.120 4.668 5.880 3.500 8 3.500c2.120 0 3.879 1.168 5.168 2.457A13.133 13.133 0 0 1 14.828 8c-.058.087-.122.183-.195.288-.335.480-.830 1.120-1.465 1.755C11.879 11.332 10.119 12.500 8 12.500c-2.120 0-3.879-1.168-5.168-2.457A13.134 13.134 0 0 1 1.172 8z"/><path d="M8 5.500a2.500 2.500 0 1 0 0 5 2.500 2.500 0 0 0 0-5zM4.500 8a3.500 3.500 0 1 1 7 0 3.500 3.500 0 0 1-7 0z"/></svg></span><span class="ab"><svg class="ip" viewBox="0 0 16 16"><path d="M12.146.146a.5.5 0 0 1 .708 0l3 3a.5.5 0 0 1 0 .708l-10 10a.5.5 0 0 1-.168.110l-5 2a.5.5 0 0 1-.650-.650l2-5a.5.5 0 0 1 .110-.168l10-10zM11.207 2.500 13.500 4.793 14.793 3.500 12.500 1.207 11.207 2.500zm1.586 3L10.500 3.207 4 9.707V10h.5a.5.5 0 0 1 .5.5v.5h.5a.5.5 0 0 1 .5.5v.5h.293l6.500-6.500zm-9.761 5.175-.106.106-1.528 3.821 3.821-1.528.106-.106A.5.5 0 0 1 5 12.500V12h-.5a.5.5 0 0 1-.5-.5V11h-.5a.5.5 0 0 1-.468-.325z"/></svg></span></td></tr>
<tr class="r"><td>15</td><td>Heartland Logistics</td><td>Kansas City, MO</td><td>555-200-2010</td><td>tech@heartlandlog.com</td><td>$0</td><td class="c"><span class="pill">ACTIVE</span></td><td class="c"><span class="ab" style="margin-left:1px"><svg class="ie" viewBox="0 0 16 16"><path d="M16 8s-3-5.500-8-5.500S0 8 0 8s3 5.500 8 5.500S16 8 16 8zM1.173 8a13.133 13.133 0 0 1 1.660-2.043C4.120 4.668 5.880 3.500 8 3.500c2.120 0 3.879 1.168 5.168 2.457A13.133 13.133 0 0 1 14.828 8c-.058.087-.122.183-.195.288-.335.480-.830 1.120-1.465 1.755C11.879 11.332 10.119 12.500 8 12.500c-2.120 0-3.879-1.168-5.168-2.457A13.134 13.134 0 0 1 1.172 8z"/><path d="M8 5.500a2.500 2.500 0 1 0 0 5 2.500 2.500 0 0 0 0-5zM4.500 8a3.500 3.500 0 1 1 7 0 3.500 3.500 0 0 1-7 0z"/></svg></span><span class="ab"><svg class="ip" viewBox="0 0 16 16"><path d="M12.146.146a.5.5 0 0 1 .708 0l3 3a.5.5 0 0 1 0 .708l-10 10a.5.5 0 0 1-.168.110l-5 2a.5.5 0 0 1-.650-.650l2-5a.5.5 0 0 1 .110-.168l10-10zM11.207 2.500 13.500 4.793 14.793 3.500 12.500 1.207 11.207 2.500zm1.586 3L10.500 3.207 4 9.707V10h.5a.5.5 0 0 1 .5.5v.5h.5a.5.5 0 0 1 .5.5v.5h.293l6.500-6.500zm-9.761 5.175-.106.106-1.528 3.821 3.821-1.528.106-.106A.5.5 0 0 1 5 12.500V12h-.5a.5.5 0 0 1-.5-.5V11h-.5a.5.5 0 0 1-.468-.325z"/></svg></span></td></tr>
<tr class="r"><td>22</td><td>Johnson Residence</td><td>Portland, OR</td><td>555-500-5002</td><td>mike.johnson@email.com</td><td>$0</td><td class="c"><span class="pill">ACTIVE</span></td><td class="c"><span class="ab" style="margin-left:1px"><svg class="ie" viewBox="0 0 16 16"><path d="M16 8s-3-5.500-8-5.500S0 8 0 8s3 5.500 8 5.500S16 8 16 8zM1.173 8a13.133 13.133 0 0 1 1.660-2.043C4.120 4.668 5.880 3.500 8 3.500c2.120 0 3.879 1.168 5.168 2.457A13.133 13.133 0 0 1 14.828 8c-.058.087-.122.183-.195.288-.335.480-.830 1.120-1.465 1.755C11.879 11.332 10.119 12.500 8 12.500c-2.120 0-3.879-1.168-5.168-2.457A13.134 13.134 0 0 1 1.172 8z"/><path d="M8 5.500a2.500 2.500 0 1 0 0 5 2.500 2.500 0 0 0 0-5zM4.500 8a3.500 3.500 0 1 1 7 0 3.500 3.500 0 0 1-7 0z"/></svg></span><span class="ab"><svg class="ip" viewBox="0 0 16 16"><path d="M12.146.146a.5.5 0 0 1 .708 0l3 3a.5.5 0 0 1 0 .708l-10 10a.5.5 0 0 1-.168.110l-5 2a.5.5 0 0 1-.650-.650l2-5a.5.5 0 0 1 .110-.168l10-10zM11.207 2.500 13.500 4.793 14.793 3.500 12.500 1.207 11.207 2.500zm1.586 3L10.500 3.207 4 9.707V10h.5a.5.5 0 0 1 .5.5v.5h.5a.5.5 0 0 1 .5.5v.5h.293l6.500-6.500zm-9.761 5.175-.106.106-1.528 3.821 3.821-1.528.106-.106A.5.5 0 0 1 5 12.500V12h-.5a.5.5 0 0 1-.5-.5V11h-.5a.5.5 0 0 1-.468-.325z"/></svg></span></td></tr>
<tr class="r"><td>23</td><td>Placeholder Row</td><td>Portland, OR</td><td>555-500-5003</td><td>x@email.com</td><td>$0</td><td class="c"><span class="pill">ACTIVE</span></td><td class="c"><span class="ab" style="margin-left:1px"><svg class="ie" viewBox="0 0 16 16"><path d="M16 8s-3-5.500-8-5.500S0 8 0 8s3 5.500 8 5.500S16 8 16 8zM1.173 8a13.133 13.133 0 0 1 1.660-2.043C4.120 4.668 5.880 3.500 8 3.500c2.120 0 3.879 1.168 5.168 2.457A13.133 13.133 0 0 1 14.828 8c-.058.087-.122.183-.195.288-.335.480-.830 1.120-1.465 1.755C11.879 11.332 10.119 12.500 8 12.500c-2.120 0-3.879-1.168-5.168-2.457A13.134 13.134 0 0 1 1.172 8z"/><path d="M8 5.500a2.500 2.500 0 1 0 0 5 2.500 2.500 0 0 0 0-5zM4.500 8a3.500 3.500 0 1 1 7 0 3.500 3.500 0 0 1-7 0z"/></svg></span><span class="ab"><svg class="ip" viewBox="0 0 16 16"><path d="M12.146.146a.5.5 0 0 1 .708 0l3 3a.5.5 0 0 1 0 .708l-10 10a.5.5 0 0 1-.168.110l-5 2a.5.5 0 0 1-.650-.650l2-5a.5.5 0 0 1 .110-.168l10-10zM11.207 2.500 13.500 4.793 14.793 3.500 12.500 1.207 11.207 2.500zm1.586 3L10.500 3.207 4 9.707V10h.5a.5.5 0 0 1 .5.5v.5h.5a.5.5 0 0 1 .5.5v.5h.293l6.500-6.500zm-9.761 5.175-.106.106-1.528 3.821 3.821-1.528.106-.106A.5.5 0 0 1 5 12.500V12h-.5a.5.5 0 0 1-.5-.5V11h-.5a.5.5 0 0 1-.468-.325z"/></svg></span></td></tr>
</tbody>
</table>
<div id="fab"><svg width="60" height="60" viewBox="0 0 60 60" style="display:block"><defs><filter id="fb"><feGaussianBlur stdDeviation=".35"/></filter></defs>
<g filter="url(#fb)" fill="none" stroke-linecap="butt" transform="translate(0 3.320) scale(1 .89)">
<path d="M27 34.500C22 32.500 16.500 34.500 12.400 39.400C17 37.500 21.500 38 25.500 40.500Z" fill="#4b4f5a"/>
<path d="M19 34.300C21.500 33.600 24.500 33.800 27 34.800L25.800 39.800C23.500 38.800 21 38.300 18.500 38.300Z" fill="#4fc3f7"/>
<path d="M46 22.500C43.500 15 29 13 26 21C23.500 28 33 30.500 40 33C47 35.500 47 43.500 38 44.600C31.500 45.300 28 41 25.500 37" stroke="#4b4f5a" stroke-width="4.800"/>
<path d="M46 22.500C43.500 15 29 13 26 21C23.500 28 33 30.500 40 33C47 35.500 47 43.500 38 44.600C31.500 45.300 28 41 25.500 37" stroke="#4fc3f7" stroke-width="4.800" stroke-dasharray="0 24 9 5.500 7 6 13 6 0 100"/>
<path d="M40 17.200L47.500 21.300L44.500 23.200L38.500 21Z" fill="#4b4f5a"/>
<path d="M41 18.300L44 20L42.500 20.600Z" fill="#39b8f0"/>
</g></svg></div>
</body>
</html>
